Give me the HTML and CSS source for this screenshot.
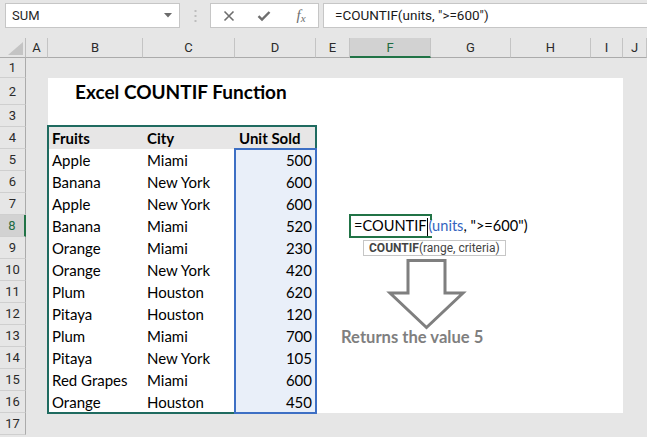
FILE: index.html
```html
<!DOCTYPE html>
<html>
<head>
<meta charset="utf-8">
<link rel="stylesheet" href="styles.css">
</head>
<body>
<div class="toolbar">
  <div class="namebox"><span>SUM</span><svg class="caret" width="8" height="5" viewBox="0 0 8 5"><path d="M0 0H8L4 4.5Z" fill="#6b6b6b"/></svg></div>
  <div class="grip"><svg width="3" height="12" viewBox="0 0 3 12"><rect x="0.5" y="0" width="2" height="2" fill="#bdbdbd"/><rect x="0.5" y="5" width="2" height="2" fill="#bdbdbd"/><rect x="0.5" y="10" width="2" height="2" fill="#bdbdbd"/></svg></div>
  <div class="fbtns">
    <span class="fb"><svg width="12" height="12" viewBox="0 0 12 12"><path d="M1.5 1.5L10.5 10.5M10.5 1.5L1.5 10.5" stroke="#6e6e6e" stroke-width="1.6" fill="none"/></svg></span>
    <span class="fb"><svg width="14" height="12" viewBox="0 0 14 12"><path d="M1.5 6.2L5 9.6L12.5 2" stroke="#6e6e6e" stroke-width="2.4" fill="none"/></svg></span>
    <span class="fb fx"><i>f</i><i class="x">x</i></span>
  </div>
  <div class="finput">=COUNTIF(units, "&gt;=600")</div>
</div>

<div class="sheet">
  <div class="corner"><svg width="15" height="13" viewBox="0 0 15 13"><path d="M15 0V13H0Z" fill="#c4c4c4"/></svg></div>
  <div class="ch cA">A</div>
  <div class="ch cB">B</div>
  <div class="ch cC">C</div>
  <div class="ch cD">D</div>
  <div class="ch cE">E</div>
  <div class="ch cF on">F</div>
  <div class="ch cG">G</div>
  <div class="ch cH">H</div>
  <div class="ch cI">I</div>
  <div class="ch cJ">J</div>

  <div class="rh r1">1</div>
  <div class="rh r2">2</div>
  <div class="rh r3">3</div>
  <div class="rh r4">4</div>
  <div class="rh r5">5</div>
  <div class="rh r6">6</div>
  <div class="rh r7">7</div>
  <div class="rh r8 on">8</div>
  <div class="rh r9">9</div>
  <div class="rh r10">10</div>
  <div class="rh r11">11</div>
  <div class="rh r12">12</div>
  <div class="rh r13">13</div>
  <div class="rh r14">14</div>
  <div class="rh r15">15</div>
  <div class="rh r16">16</div>
  <div class="rh r17">17</div>

  <div class="white"></div>
  <div class="hdrbg"></div>
  <div class="frame"></div>
  <div class="sel"></div>

  <div class="title">Excel COUNTIF Function</div>

  <div class="cell b cB r4">Fruits</div>
  <div class="cell b cC r4">City</div>
  <div class="cell b cD r4">Unit Sold</div>

  <div class="cell cB r5">Apple</div><div class="cell cC r5">Miami</div><div class="cell num cD r5">500</div>
  <div class="cell cB r6">Banana</div><div class="cell cC r6">New York</div><div class="cell num cD r6">600</div>
  <div class="cell cB r7">Apple</div><div class="cell cC r7">New York</div><div class="cell num cD r7">600</div>
  <div class="cell cB r8">Banana</div><div class="cell cC r8">Miami</div><div class="cell num cD r8">520</div>
  <div class="cell cB r9">Orange</div><div class="cell cC r9">Miami</div><div class="cell num cD r9">230</div>
  <div class="cell cB r10">Orange</div><div class="cell cC r10">New York</div><div class="cell num cD r10">420</div>
  <div class="cell cB r11">Plum</div><div class="cell cC r11">Houston</div><div class="cell num cD r11">620</div>
  <div class="cell cB r12">Pitaya</div><div class="cell cC r12">Houston</div><div class="cell num cD r12">120</div>
  <div class="cell cB r13">Plum</div><div class="cell cC r13">Miami</div><div class="cell num cD r13">700</div>
  <div class="cell cB r14">Pitaya</div><div class="cell cC r14">New York</div><div class="cell num cD r14">105</div>
  <div class="cell cB r15">Red Grapes</div><div class="cell cC r15">Miami</div><div class="cell num cD r15">600</div>
  <div class="cell cB r16">Orange</div><div class="cell cC r16">Houston</div><div class="cell num cD r16">450</div>

  <div class="active"></div>
  <div class="edit">=COUNTIF<span class="cursor"></span><span class="ref">(units</span>, "&gt;=600")</div>
  <div class="tip"><b>COUNTIF</b>(range, criteria)</div>

  <div class="arrow"><svg width="161" height="88" viewBox="0 0 161 88"><path d="M58 1.5H95V34H113L76.5 68.5L40 34H58Z" fill="#fff" stroke="#7f7f7f" stroke-width="3" stroke-linejoin="miter"/></svg></div>
  <div class="note">Returns the value 5</div>
</div>
</body>
</html>
```

FILE: styles.css
```css
* { box-sizing: border-box; margin: 0; padding: 0; }

body {
  margin: 0;
  width: 647px;
  height: 437px;
  overflow: hidden;
  background: #e6e6e6;
  font-family: Roboto, "Liberation Sans", sans-serif;
  color: #262626;
}

/* ---------- formula bar ---------- */
.toolbar {
  display: flex;
  align-items: flex-start;
  height: 38px;
  padding: 3px 0 0 5px;
}
.namebox {
  width: 175px;
  height: 25px;
  background: #fff;
  border: 1px solid #c6c6c6;
  display: flex;
  align-items: center;
  justify-content: space-between;
  padding: 0 7px 0 6px;
  font-size: 13px;
}
.grip {
  width: 30px;
  height: 25px;
  display: flex;
  align-items: center;
  justify-content: center;
}
.fbtns {
  width: 109px;
  height: 25px;
  background: #fff;
  border: 1px solid #c6c6c6;
  display: flex;
  align-items: center;
}
.fb {
  width: 36px;
  height: 23px;
  display: flex;
  align-items: center;
  justify-content: center;
}
.fx {
  font-family: "Liberation Serif", serif;
  color: #6e6e6e;
  font-size: 15px;
  padding-left: 2px;
}
.fx .x { font-size: 11px; margin-top: 4px; }
.finput {
  flex: 1;
  height: 25px;
  margin-left: 4px;
  background: #fff;
  border: 1px solid #c6c6c6;
  border-right: none;
  padding-left: 11px;
  font-size: 13.5px;
  line-height: 23px;
  color: #1a1a1a;
  white-space: nowrap;
}

/* ---------- sheet grid ---------- */
.sheet {
  display: grid;
  grid-template-columns: 26px 22px 95px 92px 81px 34px 81px 80px 80px 32px 1fr;
  grid-template-rows: 20px 20px 27px repeat(15, 22px) 1fr;
  height: 399px;
}

.cA { grid-column: 2; }
.cB { grid-column: 3; }
.cC { grid-column: 4; }
.cD { grid-column: 5; }
.cE { grid-column: 6; }
.cF { grid-column: 7; }
.cG { grid-column: 8; }
.cH { grid-column: 9; }
.cI { grid-column: 10; }
.cJ { grid-column: 11; }

.r1 { grid-row: 2; }
.r2 { grid-row: 3; }
.r3 { grid-row: 4; }
.r4 { grid-row: 5; }
.r5 { grid-row: 6; }
.r6 { grid-row: 7; }
.r7 { grid-row: 8; }
.r8 { grid-row: 9; }
.r9 { grid-row: 10; }
.r10 { grid-row: 11; }
.r11 { grid-row: 12; }
.r12 { grid-row: 13; }
.r13 { grid-row: 14; }
.r14 { grid-row: 15; }
.r15 { grid-row: 16; }
.r16 { grid-row: 17; }
.r17 { grid-row: 18; }

.corner {
  grid-column: 1;
  grid-row: 1;
  border-right: 1px solid #bdbdbd;
  border-bottom: 1px solid #ababab;
  display: flex;
  align-items: flex-end;
  justify-content: flex-end;
  padding: 0 2px 2px 0;
}
.ch {
  grid-row: 1;
  border-right: 1px solid #c4c4c4;
  border-bottom: 1px solid #ababab;
  display: flex;
  align-items: center;
  justify-content: center;
  font-size: 13px;
  color: #2b2b2b;
}
.ch.on {
  background: #d2d2d2;
  color: #1e6b41;
  border-bottom: 2px solid #217346;
}
.rh {
  grid-column: 1;
  border-right: 1px solid #ababab;
  border-bottom: 1px solid #cfcfcf;
  display: flex;
  align-items: center;
  justify-content: center;
  font-size: 13px;
  color: #2b2b2b;
}
.rh.on {
  background: #d2d2d2;
  color: #1e6b41;
  border-right: 2px solid #217346;
}

.white {
  grid-column: 3 / 11;
  grid-row: 3 / 18;
  background: #fff;
}
.hdrbg {
  grid-column: 3 / 6;
  grid-row: 5;
  background: #e7e6e6;
}
.frame {
  grid-column: 3 / 6;
  grid-row: 5 / 18;
  border: 2px solid #1f6b60;
  margin: -2px -1px -1px -1px;
}
.sel {
  grid-column: 5;
  grid-row: 6 / 18;
  border: 2px solid #3d6fc4;
  background: #e9eff9;
  margin: -1px -1px -1px -1px;
}

/* ---------- cell text ---------- */
.title {
  grid-column: 3 / 8;
  grid-row: 3;
  display: flex;
  align-items: flex-end;
  padding: 0 0 2px 27px;
  font-family: Lato, "Open Sans", sans-serif;
  font-weight: 700;
  font-size: 19px;
  line-height: 23px;
  color: #000;
  white-space: nowrap;
}
.cell {
  display: flex;
  align-items: flex-end;
  padding: 0 3px 2px 4px;
  font-family: Lato, "Open Sans", sans-serif;
  font-size: 15px;
  line-height: 18px;
  color: #000;
  white-space: nowrap;
}
.cell.b { font-weight: 700; }
.cell.num { justify-content: flex-end; padding-right: 4px; }

.active {
  grid-column: 7;
  grid-row: 9;
  border: 2px solid #217346;
  border-right: none;
  margin: -1px -1px -1px -1px;
  position: relative;
}
.active::after {
  content: "";
  position: absolute;
  right: 0;
  top: -2px;
  width: 2px;
  height: 6px;
  background: #217346;
}
.edit {
  grid-column: 7 / 11;
  grid-row: 9;
  display: flex;
  align-items: flex-end;
  padding: 0 0 2px 4px;
  font-family: Lato, "Open Sans", sans-serif;
  font-size: 14.6px;
  line-height: 18px;
  color: #000;
  white-space: pre;
}
.cursor {
  display: inline-block;
  width: 1px;
  height: 19px;
  background: #000;
  margin: 0 1px 0 0;
  align-self: flex-end;
  margin-bottom: -2px;
}
.ref { color: #3464c0; }

.tip {
  grid-column: 7 / 11;
  grid-row: 10;
  justify-self: start;
  align-self: start;
  margin: 3px 0 0 13px;
  height: 16px;
  padding: 0 5px;
  border: 1px solid #c6c6c6;
  background: #fff;
  font-size: 12px;
  line-height: 14px;
  color: #444;
  white-space: nowrap;
}
.tip b { font-weight: 700; }

.arrow {
  grid-column: 7 / 9;
  grid-row: 11 / 15;
}
.arrow svg { display: block; }

.note {
  grid-column: 6 / 10;
  grid-row: 14;
  display: flex;
  align-items: flex-end;
  padding-left: 25px;
  font-family: Lato, "Open Sans", sans-serif;
  font-weight: 700;
  font-size: 16.6px;
  line-height: 19px;
  color: #7f7f7f;
  white-space: nowrap;
}
```
